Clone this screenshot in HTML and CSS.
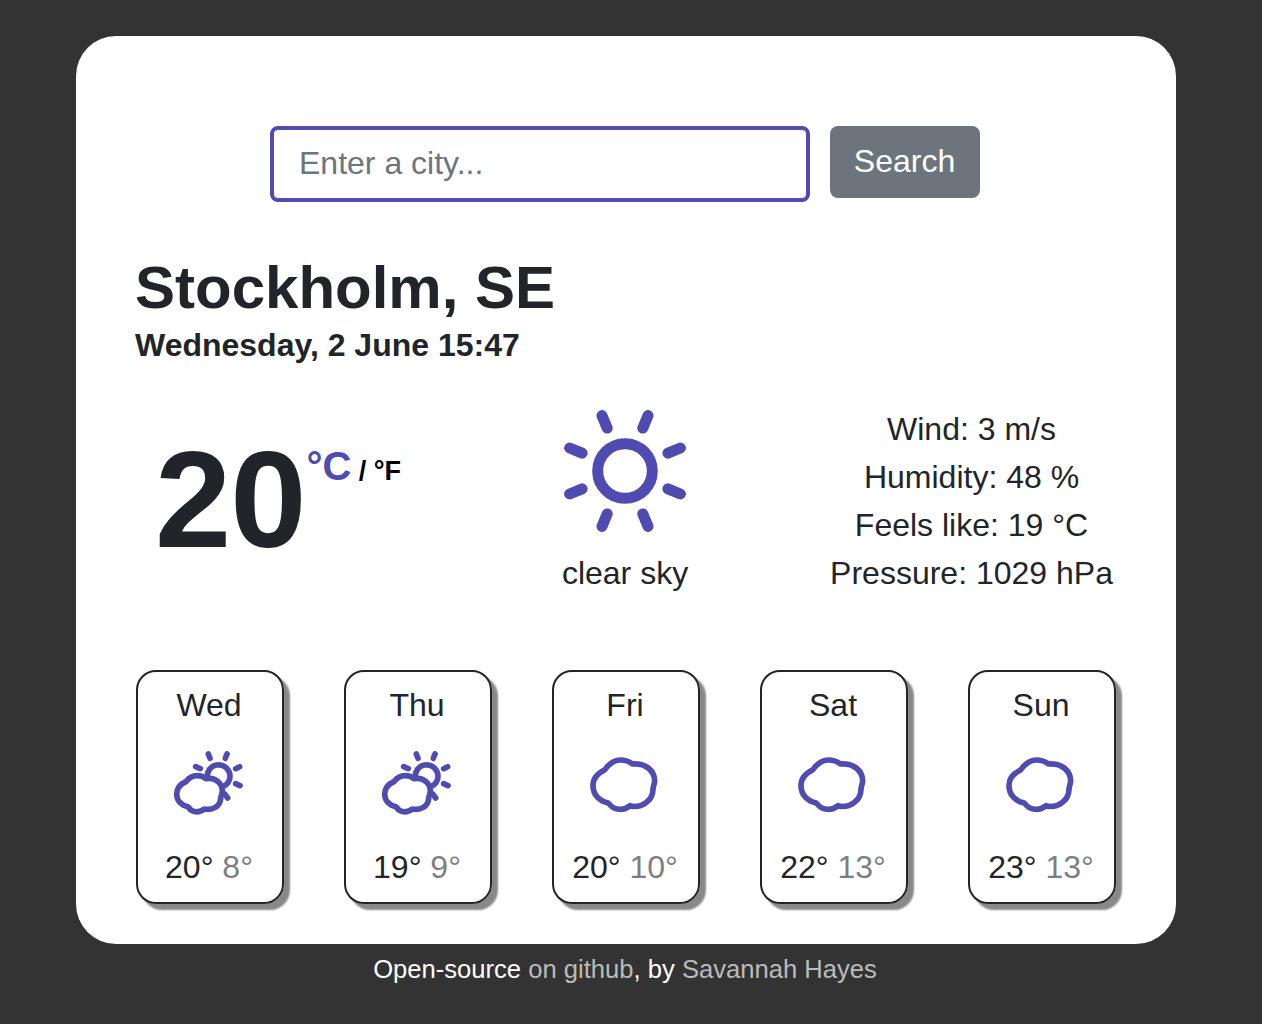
FILE: index.html
```html
<!DOCTYPE html>
<html lang="en">
<head>
<meta charset="utf-8">
<title>Weather</title>
<link rel="stylesheet" href="styles.css">
</head>
<body>
<svg class="defs" aria-hidden="true">
  <symbol id="partly" viewBox="0 0 240 228">
    <path d="M118 99A34 34 0 1 1 167 127"/>
    <path d="M26 150C26 130 37 120 55 112C64 100 74 95 87 95C99 95 108 98 114 104C141 99 163 117 163 141C163 150 158 154 158 164C156 187 134 200 109 195C93 208 70 206 60 188C41 184 26 171 26 150Z"/>
    <path d="M121 30L126 43M177 30L172 43M83 68L97 74M215 68L203 74M203 119L216 125M171 151L179 162"/>
  </symbol>
  <symbol id="cloud" viewBox="0 0 240 228">
    <path d="M27 125C27 103 42 87 62 78C76 58 92 48 109 48C123 48 135 52 146 60C181 56 212 78 212 111C212 120 207 126 207 137C206 170 172 195 138 185C118 201 89 200 73 177C47 173 27 152 27 125Z"/>
  </symbol>
</svg>
<main class="app">
  <form class="search">
    <input class="city-input" type="text" placeholder="Enter a city...">
    <button class="search-button" type="button">Search</button>
  </form>
  <header class="place">
    <h1>Stockholm, SE</h1>
    <h2>Wednesday, 2 June 15:47</h2>
  </header>
  <section class="current">
    <div class="temperature"><strong class="degrees">20</strong><span class="units"><b class="active">°C</b><b class="other"> / °F</b></span></div>
    <div class="sky">
      <svg class="sun" viewBox="-64 -64 128 128">
        <circle r="27.3" stroke-width="11"/>
        <path stroke-width="11" d="M-23-55.4L-17.8-42.9M23-55.4L17.8-42.9M-23 55.4L-17.8 42.9M23 55.4L17.8 42.9M-55.4-23L-42.9-17.8M55.4-23L42.9-17.8M-55.4 23L-42.9 17.8M55.4 23L42.9 17.8"/>
      </svg>
      <div>clear sky</div>
    </div>
    <ul class="details">
      <li>Wind: 3 m/s</li>
      <li>Humidity: 48 %</li>
      <li>Feels like: 19 °C</li>
      <li>Pressure: 1029 hPa</li>
    </ul>
  </section>
  <section class="forecast">
    <article class="day"><div>Wed</div><svg class="icon"><use href="#partly"/></svg><div>20° <span class="low">8°</span></div></article>
    <article class="day"><div>Thu</div><svg class="icon"><use href="#partly"/></svg><div>19° <span class="low">9°</span></div></article>
    <article class="day"><div>Fri</div><svg class="icon"><use href="#cloud"/></svg><div>20° <span class="low">10°</span></div></article>
    <article class="day"><div>Sat</div><svg class="icon"><use href="#cloud"/></svg><div>22° <span class="low">13°</span></div></article>
    <article class="day"><div>Sun</div><svg class="icon"><use href="#cloud"/></svg><div>23° <span class="low">13°</span></div></article>
  </section>
</main>
<footer class="credits">Open-source <a>on github</a>, by <a>Savannah Hayes</a></footer>
</body>
</html>
```
FILE: styles.css
```css
* { box-sizing: border-box; }
body {
  margin: 0;
  height: 1024px;
  padding-top: 36px;
  overflow: hidden;
  background: #333;
  color: #212529;
  font: 32px/48px "Liberation Sans", Arial, sans-serif;
}
svg {
  display: block;
  fill: none;
  stroke: #4f4bb1;
  stroke-linecap: round;
  stroke-linejoin: round;
}
.defs { display: none; }
.app {
  width: 1100px;
  height: 908px;
  margin-left: 76px;
  padding: 90px 60px 40px;
  border-radius: 40px;
  background: #fff;
}
.search {
  display: flex;
  align-items: flex-start;
  justify-content: center;
  gap: 20px;
  height: 76px;
  margin: 0 2px 0 0;
}
.city-input {
  width: 540px;
  height: 76px;
  padding: 0 24px 2px 25px;
  border: 4px solid #4f4bb1;
  border-radius: 8px;
  outline: 0;
  font: inherit;
}
.city-input::placeholder { color: #6c757d; opacity: 1; }
.search-button {
  width: 150px;
  height: 72px;
  padding: 0 1px 2px 0;
  border: 0;
  border-radius: 8px;
  background: #6c757d;
  color: #fff;
  font: inherit;
}
.place { margin-left: -1px; padding-top: 50px; }
h1, h2 { margin: 0; font-weight: 700; }
h1 { font-size: 60px; line-height: 72px; }
h2 { font-size: 32px; line-height: 46px; margin-top: -2px; }
.current {
  display: flex;
  height: 302px;
  padding-top: 37px;
}
.current > * { flex-shrink: 0; }
.temperature { display: flex; width: 326px; padding: 25px 0 0 19px; }
.degrees { font-size: 137px; line-height: 140px; letter-spacing: -1px; }
.units { padding-left: 1px; line-height: 72px; white-space: pre; }
.active { color: #4f4bb1; font-size: 40px; }
.other { color: #000; font-size: 27px; }
.sky { width: 326px; margin-right: 38px; text-align: center; }
.sun { width: 128px; height: 128px; margin: 2px auto 14px; }
.details {
  width: 291px;
  margin: 0;
  padding: 0;
  list-style: none;
  text-align: center;
  white-space: nowrap;
}
.forecast { display: flex; justify-content: space-between; }
.day {
  width: 148px;
  height: 234px;
  padding: 9px 2px 9px 0;
  border: 2px solid #212529;
  border-radius: 20px;
  box-shadow: 6px 6px 2px #888;
  text-align: center;
}
.icon { width: 80px; height: 76px; margin: 15px 0 23px 30px; stroke-width: 17px; }
.low { color: #7c7f82; }
.credits {
  width: 1100px;
  margin: 6px 0 0 75px;
  color: #fff;
  font-size: 25.6px;
  line-height: 38px;
  text-align: center;
}
.credits a { color: #bbb; }
```
